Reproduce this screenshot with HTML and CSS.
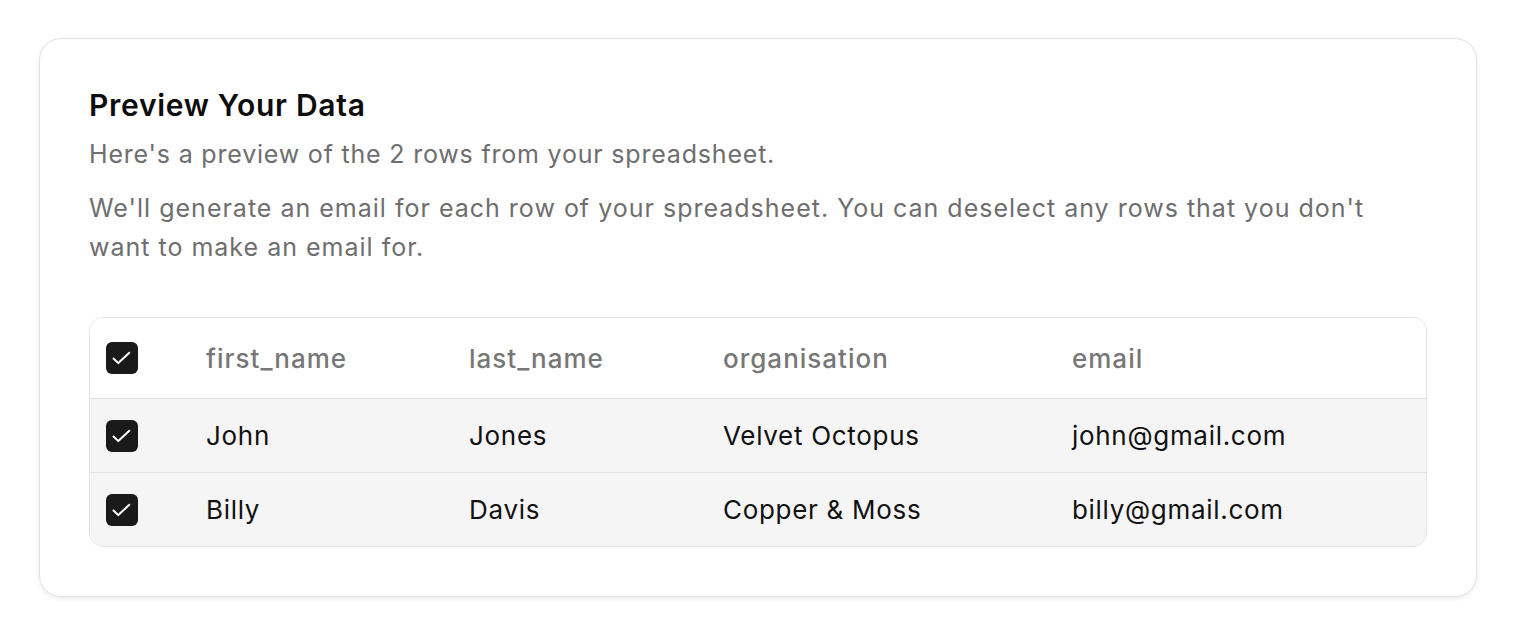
FILE: index.html
```html
<!DOCTYPE html>
<html>
<head>
<meta charset="utf-8">
<link rel="stylesheet" href="styles.css">
</head>
<body>
<div class="page">
  <div class="card">
    <h1 class="title">Preview Your Data</h1>
    <p class="sub">Here's a preview of the 2 rows from your spreadsheet.</p>
    <p class="desc">We'll generate an email for each row of your spreadsheet. You can deselect any rows that you don't want to make an email for.</p>
    <div class="table">
      <div class="row head">
        <div class="cell check"><span class="cb"><svg viewBox="0 0 32 32" width="32" height="32"><path d="M7.5 16.5l4.8 4.6 11-10.4" fill="none" stroke="#fff" stroke-width="2" stroke-linecap="round" stroke-linejoin="round"/></svg></span></div>
        <div class="cell">first_name</div>
        <div class="cell">last_name</div>
        <div class="cell">organisation</div>
        <div class="cell">email</div>
      </div>
      <div class="row body">
        <div class="cell check"><span class="cb"><svg viewBox="0 0 32 32" width="32" height="32"><path d="M7.5 16.5l4.8 4.6 11-10.4" fill="none" stroke="#fff" stroke-width="2" stroke-linecap="round" stroke-linejoin="round"/></svg></span></div>
        <div class="cell">John</div>
        <div class="cell">Jones</div>
        <div class="cell">Velvet Octopus</div>
        <div class="cell">john@gmail.com</div>
      </div>
      <div class="row body">
        <div class="cell check"><span class="cb"><svg viewBox="0 0 32 32" width="32" height="32"><path d="M7.5 16.5l4.8 4.6 11-10.4" fill="none" stroke="#fff" stroke-width="2" stroke-linecap="round" stroke-linejoin="round"/></svg></span></div>
        <div class="cell">Billy</div>
        <div class="cell">Davis</div>
        <div class="cell">Copper &amp; Moss</div>
        <div class="cell">billy@gmail.com</div>
      </div>
    </div>
  </div>
</div>
</body>
</html>
```
FILE: styles.css
```css
* { box-sizing: border-box; }
html, body { margin: 0; padding: 0; background: #fff; }
body { font-family: Inter, "Noto Sans", sans-serif; color: #111; }
.page { padding: 38px 39px; }
.card {
  border: 1.5px solid #e2e2e2;
  border-radius: 22px;
  box-shadow: 0 2px 4px rgba(0,0,0,0.08);
  padding: 46px 49px 49px;
}
.title { margin: 0; font-size: 30px; font-weight: 600; line-height: 40px; color: #0d0d0d; letter-spacing: 0.7px; }
.sub { margin: 10px 0 0; font-size: 25px; line-height: 38px; color: #6e6e6e; letter-spacing: 0.8px; }
.desc { margin: 16px 0 0; font-size: 25px; line-height: 39px; color: #6e6e6e; letter-spacing: 1px; max-width: 1310px; }
.table {
  margin-top: 50px;
  border: 1.5px solid #e2e2e2;
  border-radius: 14px;
  overflow: hidden;
}
.row {
  display: grid;
  grid-template-columns: 116px 263px 254px 349px 1fr;
  align-items: center;
}
.row.head { height: 80px; background: #fff; }
.row.body { height: 74px; background: #f5f5f5; border-top: 1.5px solid #e2e2e2; }
.cell { font-size: 26px; color: #111; letter-spacing: 0.7px; }
.head .cell { color: #777; font-weight: 500; letter-spacing: 1px; }
.check { padding-left: 16px; display: flex; align-items: center; }
.cb { width: 32px; height: 32px; border-radius: 6px; background: #1a1a1a; display: block; }
.cb svg { display: block; }
```
